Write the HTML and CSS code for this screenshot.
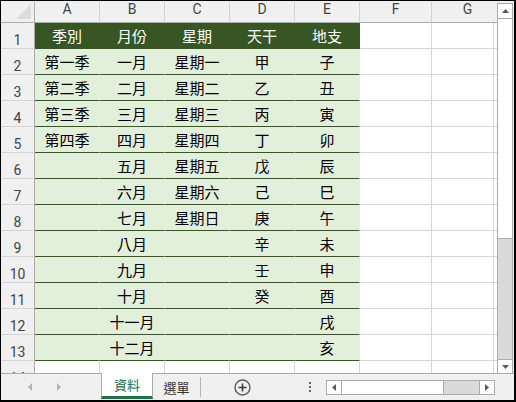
FILE: index.html
```html
<!DOCTYPE html>
<html lang="zh-Hant">
<head>
<meta charset="utf-8">
<title>Sheet</title>
<link rel="stylesheet" href="styles.css">
</head>
<body>
<div class="window">
  <div class="main">
    <div class="sheet">
      <div class="row head">
        <div class="cell corner"><svg width="33" height="21" viewBox="0 0 33 21"><polygon points="30,3 30,18 15,18" fill="#dcdcdc"/></svg></div>
        <div class="cell ch">A</div><div class="cell ch">B</div><div class="cell ch">C</div><div class="cell ch">D</div><div class="cell ch">E</div><div class="cell ch">F</div><div class="cell ch">G</div>
      </div>
      <div class="row">
        <div class="cell rh">1</div>
        <div class="cell hg">季別</div><div class="cell hg">月份</div><div class="cell hg">星期</div><div class="cell hg">天干</div><div class="cell hg">地支</div>
        <div class="cell"></div><div class="cell"></div><div class="cell filler"></div>
      </div>
      <div class="row">
        <div class="cell rh">2</div>
        <div class="cell g">第一季</div><div class="cell g">一月</div><div class="cell g">星期一</div><div class="cell g">甲</div><div class="cell g">子</div>
        <div class="cell"></div><div class="cell"></div><div class="cell filler"></div>
      </div>
      <div class="row">
        <div class="cell rh">3</div>
        <div class="cell g">第二季</div><div class="cell g">二月</div><div class="cell g">星期二</div><div class="cell g">乙</div><div class="cell g">丑</div>
        <div class="cell"></div><div class="cell"></div><div class="cell filler"></div>
      </div>
      <div class="row">
        <div class="cell rh">4</div>
        <div class="cell g">第三季</div><div class="cell g">三月</div><div class="cell g">星期三</div><div class="cell g">丙</div><div class="cell g">寅</div>
        <div class="cell"></div><div class="cell"></div><div class="cell filler"></div>
      </div>
      <div class="row">
        <div class="cell rh">5</div>
        <div class="cell g">第四季</div><div class="cell g">四月</div><div class="cell g">星期四</div><div class="cell g">丁</div><div class="cell g">卯</div>
        <div class="cell"></div><div class="cell"></div><div class="cell filler"></div>
      </div>
      <div class="row">
        <div class="cell rh">6</div>
        <div class="cell g"></div><div class="cell g">五月</div><div class="cell g">星期五</div><div class="cell g">戊</div><div class="cell g">辰</div>
        <div class="cell"></div><div class="cell"></div><div class="cell filler"></div>
      </div>
      <div class="row">
        <div class="cell rh">7</div>
        <div class="cell g"></div><div class="cell g">六月</div><div class="cell g">星期六</div><div class="cell g">己</div><div class="cell g">巳</div>
        <div class="cell"></div><div class="cell"></div><div class="cell filler"></div>
      </div>
      <div class="row">
        <div class="cell rh">8</div>
        <div class="cell g"></div><div class="cell g">七月</div><div class="cell g">星期日</div><div class="cell g">庚</div><div class="cell g">午</div>
        <div class="cell"></div><div class="cell"></div><div class="cell filler"></div>
      </div>
      <div class="row">
        <div class="cell rh">9</div>
        <div class="cell g"></div><div class="cell g">八月</div><div class="cell g"></div><div class="cell g">辛</div><div class="cell g">未</div>
        <div class="cell"></div><div class="cell"></div><div class="cell filler"></div>
      </div>
      <div class="row">
        <div class="cell rh">10</div>
        <div class="cell g"></div><div class="cell g">九月</div><div class="cell g"></div><div class="cell g">壬</div><div class="cell g">申</div>
        <div class="cell"></div><div class="cell"></div><div class="cell filler"></div>
      </div>
      <div class="row">
        <div class="cell rh">11</div>
        <div class="cell g"></div><div class="cell g">十月</div><div class="cell g"></div><div class="cell g">癸</div><div class="cell g">酉</div>
        <div class="cell"></div><div class="cell"></div><div class="cell filler"></div>
      </div>
      <div class="row">
        <div class="cell rh">12</div>
        <div class="cell g"></div><div class="cell g">十一月</div><div class="cell g"></div><div class="cell g"></div><div class="cell g">戌</div>
        <div class="cell"></div><div class="cell"></div><div class="cell filler"></div>
      </div>
      <div class="row">
        <div class="cell rh">13</div>
        <div class="cell g"></div><div class="cell g">十二月</div><div class="cell g"></div><div class="cell g"></div><div class="cell g">亥</div>
        <div class="cell"></div><div class="cell"></div><div class="cell filler"></div>
      </div>
      <div class="row">
        <div class="cell rh">14</div>
        <div class="cell"></div><div class="cell"></div><div class="cell"></div><div class="cell"></div><div class="cell"></div>
        <div class="cell"></div><div class="cell"></div><div class="cell filler"></div>
      </div>
    </div>
    <div class="vscroll">
      <div class="vbtn vup"><svg width="7" height="4" viewBox="0 0 7 4"><polygon points="3.5,0 7,4 0,4" fill="#595959"/></svg></div>
      <div class="vthumb"></div>
      <div class="vtrack"></div>
      <div class="vbtn vdown"><svg width="7" height="4" viewBox="0 0 7 4"><polygon points="0,0 7,0 3.5,4" fill="#595959"/></svg></div>
    </div>
  </div>
  <div class="tabs">
    <div class="nav">
      <svg width="4" height="8" viewBox="0 0 4 8"><polygon points="4,0 4,8 0,4" fill="#b4b4b4"/></svg>
      <svg width="4" height="8" viewBox="0 0 4 8"><polygon points="0,0 4,4 0,8" fill="#b4b4b4"/></svg>
    </div>
    <div class="tab active">資料</div>
    <div class="tab">選單</div>
    <div class="sep"></div>
    <div class="add"><svg width="17" height="17" viewBox="0 0 17 17"><circle cx="8.5" cy="8.5" r="7.5" fill="none" stroke="#5a5a5a" stroke-width="1.4"/><path d="M8.5 4.5v8M4.5 8.5h8" stroke="#3c3c3c" stroke-width="1.6"/></svg></div>
    <div class="dots"><svg width="2" height="10" viewBox="0 0 2 10"><rect x="0" y="0" width="2" height="2" fill="#666"/><rect x="0" y="4" width="2" height="2" fill="#666"/><rect x="0" y="8" width="2" height="2" fill="#666"/></svg></div>
    <div class="hscroll">
      <div class="hbtn hleft"><svg width="4" height="7" viewBox="0 0 4 7"><polygon points="4,0 4,7 0,3.5" fill="#595959"/></svg></div>
      <div class="hthumb"></div>
      <div class="htrack"></div>
      <div class="hbtn hright"><svg width="4" height="7" viewBox="0 0 4 7"><polygon points="0,0 4,3.5 0,7" fill="#595959"/></svg></div>
    </div>
  </div>
</div>
</body>
</html>
```

FILE: styles.css
```css
* { box-sizing: border-box; }
body { margin: 0; font-family: "Noto Sans CJK TC", "Noto Sans", sans-serif; }

.window {
  width: 516px;
  height: 402px;
  border-style: solid;
  border-color: #000;
  border-width: 1px 2px 2px 1px;
  display: flex;
  flex-direction: column;
  overflow: hidden;
  background: #f0f0f0;
}

.main { display: flex; height: 372px; flex: none; }

.sheet { width: 496px; height: 372px; overflow: hidden; background: #fff; flex: none; }

.row {
  display: grid;
  grid-template-columns: 34px repeat(5, 65px) 72px 62px 1fr;
  height: 26px;
}
.row.head {
  grid-template-columns: 34px repeat(5, 65px) 72px 72px;
  height: 22px;
}

.cell {
  display: flex;
  align-items: center;
  justify-content: center;
  border-right: 1px solid #d4d4d4;
  border-bottom: 1px solid #d4d4d4;
  font-size: 15px;
  line-height: 15px;
  color: #000;
  white-space: nowrap;
}

.corner {
  background: #f0f0f0;
  border-right-color: #ababab;
  border-bottom-color: #ababab;
  display: block;
}
.corner svg { display: block; }

.ch {
  background: #f0f0f0;
  border-bottom-color: #ababab;
  font-family: Roboto, "Open Sans", sans-serif;
  font-size: 14px;
  line-height: 17px;
  color: #444;
  align-items: flex-start;
}

.rh {
  background: #f0f0f0;
  border-right-color: #ababab;
  font-family: Roboto, "Open Sans", sans-serif;
  font-size: 14px;
  line-height: 16px;
  color: #444;
  padding-top: 8px;
}

.g {
  background: #e2efda;
  border-bottom-color: #375623;
  border-right-color: #e2efda;
}

.hg {
  background: #375623;
  color: #fff;
  border-color: #375623;
}

.filler { border-right: none; }

/* vertical scrollbar */
.vscroll {
  width: 17px;
  flex: none;
  padding: 2px 1px 0 0;
  display: flex;
  flex-direction: column;
  background: #f0f0f0;
}
.vbtn {
  background: #fff;
  border: 1px solid #ababab;
  display: flex;
  align-items: center;
  justify-content: center;
  flex: none;
}
.vbtn svg { display: block; }
.vup { height: 16px; }
.vdown { height: 14px; border-bottom: none; }
.vthumb {
  height: 220px;
  flex: none;
  background: #fff;
  border: 1px solid #ababab;
  border-top: none;
}
.vtrack {
  flex: 1;
  background: #dadada;
  border-left: 1px solid #ababab;
  border-right: 1px solid #ababab;
}

/* sheet tabs */
.tabs {
  height: 27px;
  flex: none;
  display: flex;
  align-items: center;
  border-top: 1px solid #ababab;
  background: #f0f0f0;
}
.nav {
  width: 100px;
  align-self: stretch;
  display: flex;
  align-items: center;
  gap: 25px;
  padding-left: 27px;
}
.nav svg { display: block; }

.tab {
  align-self: stretch;
  width: 47px;
  display: flex;
  align-items: center;
  justify-content: center;
  font-size: 13px;
  color: #333;
}
.tab.active {
  width: 52px;
  margin-top: -1px;
  height: 26px;
  align-self: flex-start;
  background: #fff;
  border: 1px solid #ababab;
  border-top: none;
  border-bottom: 3px solid #217346;
  color: #217346;
}

.sep {
  width: 1px;
  height: 20px;
  background: #b4b4b4;
  align-self: flex-start;
  margin-top: 3px;
}

.add { margin-left: 33px; display: flex; }
.add svg { display: block; }

.dots { margin-left: 58px; display: flex; }
.dots svg { display: block; }

.hscroll {
  margin-left: 15px;
  width: 169px;
  height: 15px;
  align-self: flex-start;
  margin-top: 6px;
  display: flex;
  border: 1px solid #ababab;
  background: #fff;
}
.hbtn {
  width: 15px;
  display: flex;
  align-items: center;
  justify-content: center;
  background: #fff;
}
.hbtn svg { display: block; }
.hleft { border-right: 1px solid #ababab; }
.hright { border-left: 1px solid #ababab; }
.hthumb { width: 102px; border-right: 1px solid #ababab; background: #fff; }
.htrack { flex: 1; background: #dadada; }
```
